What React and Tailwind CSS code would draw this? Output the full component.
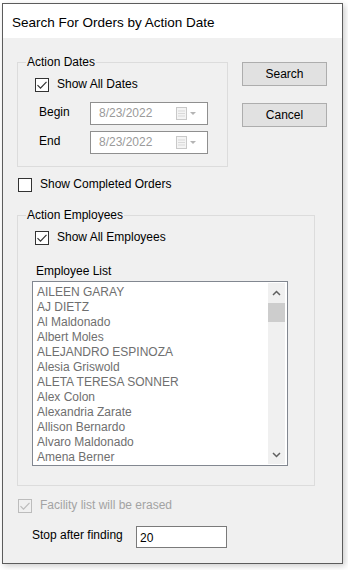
import React from 'react';

const employees = [
    'AILEEN GARAY',
    'AJ DIETZ',
    'Al Maldonado',
    'Albert Moles',
    'ALEJANDRO ESPINOZA',
    'Alesia Griswold',
    'ALETA TERESA SONNER',
    'Alex Colon',
    'Alexandria Zarate',
    'Allison Bernardo',
    'Alvaro Maldonado',
    'Amena Berner',
];

const Check = ({ checked, disabled, label, className = '' }) => {
    return (
        <div className={`flex items-center h-[15px] ${className}`}>
            <div
                className={`w-[14px] h-[14px] border flex items-center justify-center ${
                    disabled ? 'border-[#bcbcbc] bg-[#f0f0f0]' : 'border-[#333333] bg-white'
                }`}
            >
                {checked && (
                    <svg width="12" height="12" viewBox="0 0 12 12">
                        <path d="M1.5 6.2 L4.5 9.2 L10.5 2.8" fill="none" stroke={disabled ? '#bcbcbc' : '#333333'} strokeWidth="1.2" />
                    </svg>
                )}
            </div>
            <span className={`ml-[8px] ${disabled ? 'text-[#a3a3a3]' : 'text-black'}`}>{label}</span>
        </div>
    );
};

const DateBox = ({ value }) => {
    return (
        <div className="w-[118px] h-[23px] border border-[#8f8f8f] bg-white flex items-center pl-[8px] pr-[9px]">
            <span className="text-[#9a9a9a] flex-1">{value}</span>
            <svg width="22" height="13" viewBox="0 0 22 13">
                <rect x="0.5" y="0.5" width="10" height="12" fill="#f4f4f4" stroke="#c9c9c9" />
                <path d="M2 4h7M2 6.5h7M2 9h7" stroke="#d9d9d9" strokeWidth="1" />
                <path d="M14 5h6l-3 3z" fill="#b4b4b4" />
            </svg>
        </div>
    );
};

const Button = ({ children, className = '' }) => {
    return (
        <div className={`w-[85px] h-[24px] bg-[#e1e1e1] border border-[#adadad] flex items-center justify-center ${className}`}>
            {children}
        </div>
    );
};

export default function App() {
    return (
        <div className="w-[348px] h-[570px] overflow-hidden bg-white pl-[2px] pt-[3px] font-['Liberation_Sans',Arial,sans-serif] text-[12px] leading-[15px] text-black">
            <div className="w-[341px] h-[561px] border border-[#5c5c5c] flex flex-col shadow-[2px_2px_6px_rgba(0,0,0,0.2)]">
                {/* Title bar */}
                <div className="h-[34px] bg-white pl-[9px] pt-[11px] text-[13.5px] leading-[16px]">Search For Orders by Action Date</div>

                {/* Body */}
                <div className="flex-1 bg-[#f0f0f0] pl-[14px] pt-[17px]">
                    <div className="flex">
                        <fieldset className="w-[211px] h-[112px] border border-[#dcdcdc] pl-[17px]">
                            <legend className="-ml-[9px] px-[1px]">Action Dates</legend>
                            <Check checked label="Show All Dates" className="mt-[7px]" />
                            <div className="flex items-start mt-[10px] pl-[4px]">
                                <span className="w-[51px] pt-[3px]">Begin</span>
                                <DateBox value="8/23/2022" />
                            </div>
                            <div className="flex items-start mt-[6px] pl-[4px]">
                                <span className="w-[51px] pt-[3px]">End</span>
                                <DateBox value="8/23/2022" />
                            </div>
                        </fieldset>

                        <div className="ml-[14px] mt-[7px] flex flex-col">
                            <Button>Search</Button>
                            <Button className="mt-[17px]">Cancel</Button>
                        </div>
                    </div>

                    <Check label="Show Completed Orders" className="mt-[10px] pl-[1px]" />

                    {/* Action Employees */}
                    <fieldset className="mt-[16px] w-[298px] h-[278px] border border-[#dcdcdc] pl-[17px]">
                        <legend className="-ml-[9px] px-[1px]">Action Employees</legend>
                        <Check checked label="Show All Employees" className="mt-[7px]" />
                        <div className="mt-[19px] pl-[1px]">Employee List</div>
                        <div className="mt-[2px] -ml-[3px] w-[256px] h-[185px] border border-[#828790] bg-white flex">
                            <div className="flex-1 pl-[4px] pt-[3px] text-[#6f6f6f] whitespace-nowrap overflow-hidden">
                                {employees.map((name) => (
                                    <div key={name} className="h-[15px]">{name}</div>
                                ))}
                            </div>
                            <div className="w-[17px] my-[1px] mr-[2px] bg-[#f0f0f0] flex flex-col items-center">
                                <svg className="mt-[7px]" width="9" height="6" viewBox="0 0 9 6">
                                    <path d="M1 5 L4.5 1.5 L8 5" fill="none" stroke="#606060" strokeWidth="1.5" />
                                </svg>
                                <div className="mt-[7px] w-[17px] h-[19px] bg-[#cdcdcd]" />
                                <div className="flex-1" />
                                <svg className="mb-[6px]" width="9" height="6" viewBox="0 0 9 6">
                                    <path d="M1 1 L4.5 4.5 L8 1" fill="none" stroke="#606060" strokeWidth="1.5" />
                                </svg>
                            </div>
                        </div>
                    </fieldset>

                    <Check checked disabled label="Facility list will be erased" className="mt-[12px] pl-[1px]" />

                    <div className="flex items-start mt-[13px] pl-[15px]">
                        <span className="w-[104px] pt-[2px]">Stop after finding</span>
                        <div className="w-[91px] h-[22px] border border-[#7a7a7a] bg-white pl-[3px] pt-[4px]">20</div>
                    </div>
                </div>
            </div>
        </div>
    );
}
